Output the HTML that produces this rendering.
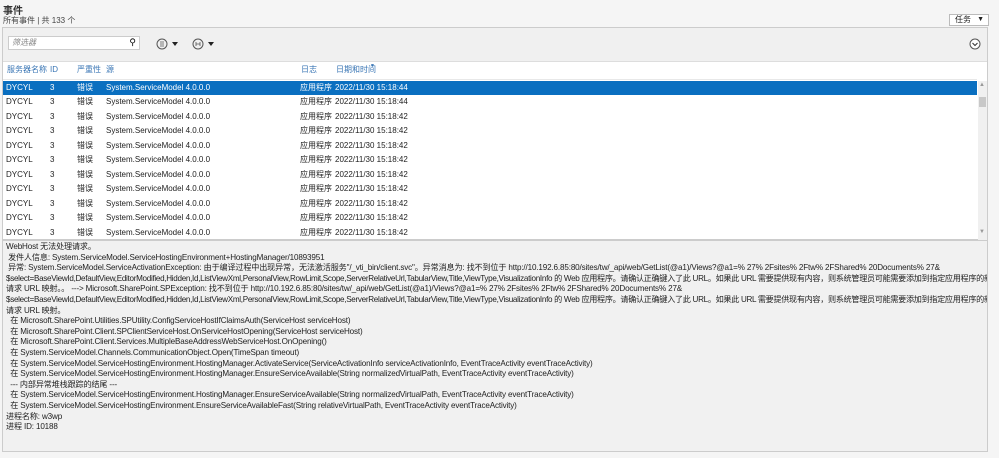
<!DOCTYPE html>
<html><head><meta charset="utf-8"><style>
*{margin:0;padding:0;box-sizing:border-box}
body{width:999px;height:458px;background:#f5f5f5;font-family:"Liberation Sans","Noto Sans CJK SC",sans-serif;position:relative;overflow:hidden;color:#222}
.a{position:absolute;white-space:nowrap}
.title{left:3px;top:2px;font-size:10px;font-weight:bold;color:#333}
.sub{left:3px;top:15px;font-size:8px;color:#444}
.task{left:949px;top:14px;width:40px;height:12px;border:1px solid #bbb;background:#fff;font-size:8px;padding-left:5px;line-height:10px}
.panel{left:2px;top:27px;width:986px;height:213px;border:1px solid #ccc;background:#fff}
.tb{left:3px;top:28px;width:984px;height:34px;background:#f0f0f0;border-bottom:1px solid #ddd}
.filter{left:8px;top:36px;width:132px;height:14px;background:#fff;border:1px solid #ccc;font-size:8px;font-style:italic;color:#888;padding-left:3px;line-height:12px}
.hdr{top:64px;height:16px;font-size:8px;color:#3a76b5;line-height:12px}
.row{left:3px;width:974px;height:14.5px;font-size:8px;line-height:14.5px}
.sel{background:#0a6fc0;color:#fff}
.c{position:absolute}
.sb{left:978px;top:81px;width:9px;height:159px;background:#f0f0f0}
.det{left:2px;top:240px;width:986px;height:212px;background:#f1f1f1;border:1px solid #ccc;font-size:8.1px;line-height:10.6px;padding:1px 0 0 3px;letter-spacing:-0.15px;color:#222;overflow:hidden}
.det div{white-space:nowrap}
.t{letter-spacing:-0.3px}
</style></head><body>
<div class="a title">事件</div>
<div class="a sub">所有事件 | 共 133 个</div>
<div class="a task">任务<span style="position:absolute;right:4px;top:0;font-size:7px">▼</span></div>
<div class="a panel"></div>
<div class="a tb"></div>
<div class="a filter">筛选器<span style="position:absolute;right:3px;top:-1px;font-style:normal;color:#000;font-size:9px">⚲</span></div>
<svg class="a" style="left:155px;top:37px" width="60" height="14"><circle cx="7" cy="7" r="5" fill="none" stroke="#555"/><path d="M5 5h4M5 7h4M5 9h4" stroke="#555" stroke-width="0.8"/><path d="M17 5h6l-3 4z" fill="#222"/><circle cx="43" cy="7" r="5" fill="none" stroke="#555"/><path d="M41 5v4M45 5v4M41 7h4" stroke="#555" stroke-width="0.8"/><path d="M53 5h6l-3 4z" fill="#222"/></svg>
<svg class="a" style="left:969px;top:38px" width="12" height="12"><circle cx="6" cy="6" r="5" fill="#fff" stroke="#555"/><path d="M3.5 5l2.5 2.5 2.5-2.5" fill="none" stroke="#333"/></svg>
<div class="a hdr" style="left:7px">服务器名称</div>
<div class="a hdr" style="left:50px">ID</div>
<div class="a hdr" style="left:77px">严重性</div>
<div class="a hdr" style="left:106px">源</div>
<div class="a hdr" style="left:301px">日志</div>
<div class="a hdr" style="left:336px">日期和时间</div>
<div class="a" style="left:370px;top:63px;font-size:5px;color:#3a76b5">▼</div>
<div class="a" style="left:3px;top:79px;width:974px;height:1px;background:#e8e8e8"></div>
<div class="a row sel" style="top:80.5px"><span class="c" style="left:3px">DYCYL</span><span class="c" style="left:47px">3</span><span class="c" style="left:74px">错误</span><span class="c" style="left:103px">System.ServiceModel 4.0.0.0</span><span class="c" style="left:297px">应用程序</span><span class="c" style="left:332px">2022/11/30 15:18:44</span></div>
<div class="a row" style="top:95px"><span class="c" style="left:3px">DYCYL</span><span class="c" style="left:47px">3</span><span class="c" style="left:74px">错误</span><span class="c" style="left:103px">System.ServiceModel 4.0.0.0</span><span class="c" style="left:297px">应用程序</span><span class="c" style="left:332px">2022/11/30 15:18:44</span></div>
<div class="a row" style="top:109.5px"><span class="c" style="left:3px">DYCYL</span><span class="c" style="left:47px">3</span><span class="c" style="left:74px">错误</span><span class="c" style="left:103px">System.ServiceModel 4.0.0.0</span><span class="c" style="left:297px">应用程序</span><span class="c" style="left:332px">2022/11/30 15:18:42</span></div>
<div class="a row" style="top:124px"><span class="c" style="left:3px">DYCYL</span><span class="c" style="left:47px">3</span><span class="c" style="left:74px">错误</span><span class="c" style="left:103px">System.ServiceModel 4.0.0.0</span><span class="c" style="left:297px">应用程序</span><span class="c" style="left:332px">2022/11/30 15:18:42</span></div>
<div class="a row" style="top:138.5px"><span class="c" style="left:3px">DYCYL</span><span class="c" style="left:47px">3</span><span class="c" style="left:74px">错误</span><span class="c" style="left:103px">System.ServiceModel 4.0.0.0</span><span class="c" style="left:297px">应用程序</span><span class="c" style="left:332px">2022/11/30 15:18:42</span></div>
<div class="a row" style="top:153px"><span class="c" style="left:3px">DYCYL</span><span class="c" style="left:47px">3</span><span class="c" style="left:74px">错误</span><span class="c" style="left:103px">System.ServiceModel 4.0.0.0</span><span class="c" style="left:297px">应用程序</span><span class="c" style="left:332px">2022/11/30 15:18:42</span></div>
<div class="a row" style="top:167.5px"><span class="c" style="left:3px">DYCYL</span><span class="c" style="left:47px">3</span><span class="c" style="left:74px">错误</span><span class="c" style="left:103px">System.ServiceModel 4.0.0.0</span><span class="c" style="left:297px">应用程序</span><span class="c" style="left:332px">2022/11/30 15:18:42</span></div>
<div class="a row" style="top:182px"><span class="c" style="left:3px">DYCYL</span><span class="c" style="left:47px">3</span><span class="c" style="left:74px">错误</span><span class="c" style="left:103px">System.ServiceModel 4.0.0.0</span><span class="c" style="left:297px">应用程序</span><span class="c" style="left:332px">2022/11/30 15:18:42</span></div>
<div class="a row" style="top:196.5px"><span class="c" style="left:3px">DYCYL</span><span class="c" style="left:47px">3</span><span class="c" style="left:74px">错误</span><span class="c" style="left:103px">System.ServiceModel 4.0.0.0</span><span class="c" style="left:297px">应用程序</span><span class="c" style="left:332px">2022/11/30 15:18:42</span></div>
<div class="a row" style="top:211px"><span class="c" style="left:3px">DYCYL</span><span class="c" style="left:47px">3</span><span class="c" style="left:74px">错误</span><span class="c" style="left:103px">System.ServiceModel 4.0.0.0</span><span class="c" style="left:297px">应用程序</span><span class="c" style="left:332px">2022/11/30 15:18:42</span></div>
<div class="a row" style="top:225.5px"><span class="c" style="left:3px">DYCYL</span><span class="c" style="left:47px">3</span><span class="c" style="left:74px">错误</span><span class="c" style="left:103px">System.ServiceModel 4.0.0.0</span><span class="c" style="left:297px">应用程序</span><span class="c" style="left:332px">2022/11/30 15:18:42</span></div>
<div class="a sb"></div>
<div class="a" style="left:979px;top:82px;font-size:6px;color:#999">▲</div>
<div class="a" style="left:979px;top:97px;width:7px;height:10px;background:#c8c8c8"></div>
<div class="a" style="left:979px;top:229px;font-size:6px;color:#999">▼</div>
<div class="a det">
<div>WebHost 无法处理请求。</div>
<div>&nbsp;发件人信息: System.ServiceModel.ServiceHostingEnvironment+HostingManager/10893951</div>
<div>&nbsp;异常: System.ServiceModel.ServiceActivationException: 由于编译过程中出现异常，无法激活服务"/_vti_bin/client.svc"。异常消息为: 找不到位于 http://10.192.6.85:80/sites/tw/_api/web/GetList(@a1)/Views?@a1=% 27% 2Fsites% 2Ftw% 2FShared% 20Documents% 27&amp;</div>
<div class="t">$select=BaseViewId,DefaultView,EditorModified,Hidden,Id,ListViewXml,PersonalView,RowLimit,Scope,ServerRelativeUrl,TabularView,Title,ViewType,VisualizationInfo 的 Web 应用程序。请确认正确键入了此 URL。如果此 URL 需要提供现有内容，则系统管理员可能需要添加到指定应用程序的新</div>
<div>请求 URL 映射。。 ---&gt; Microsoft.SharePoint.SPException: 找不到位于 http://10.192.6.85:80/sites/tw/_api/web/GetList(@a1)/Views?@a1=% 27% 2Fsites% 2Ftw% 2FShared% 20Documents% 27&amp;</div>
<div class="t">$select=BaseViewId,DefaultView,EditorModified,Hidden,Id,ListViewXml,PersonalView,RowLimit,Scope,ServerRelativeUrl,TabularView,Title,ViewType,VisualizationInfo 的 Web 应用程序。请确认正确键入了此 URL。如果此 URL 需要提供现有内容，则系统管理员可能需要添加到指定应用程序的新</div>
<div>请求 URL 映射。</div>
<div>&nbsp;&nbsp;在 Microsoft.SharePoint.Utilities.SPUtility.ConfigServiceHostIfClaimsAuth(ServiceHost serviceHost)</div>
<div>&nbsp;&nbsp;在 Microsoft.SharePoint.Client.SPClientServiceHost.OnServiceHostOpening(ServiceHost serviceHost)</div>
<div>&nbsp;&nbsp;在 Microsoft.SharePoint.Client.Services.MultipleBaseAddressWebServiceHost.OnOpening()</div>
<div>&nbsp;&nbsp;在 System.ServiceModel.Channels.CommunicationObject.Open(TimeSpan timeout)</div>
<div>&nbsp;&nbsp;在 System.ServiceModel.ServiceHostingEnvironment.HostingManager.ActivateService(ServiceActivationInfo serviceActivationInfo, EventTraceActivity eventTraceActivity)</div>
<div>&nbsp;&nbsp;在 System.ServiceModel.ServiceHostingEnvironment.HostingManager.EnsureServiceAvailable(String normalizedVirtualPath, EventTraceActivity eventTraceActivity)</div>
<div>&nbsp;&nbsp;--- 内部异常堆栈跟踪的结尾 ---</div>
<div>&nbsp;&nbsp;在 System.ServiceModel.ServiceHostingEnvironment.HostingManager.EnsureServiceAvailable(String normalizedVirtualPath, EventTraceActivity eventTraceActivity)</div>
<div>&nbsp;&nbsp;在 System.ServiceModel.ServiceHostingEnvironment.EnsureServiceAvailableFast(String relativeVirtualPath, EventTraceActivity eventTraceActivity)</div>
<div>进程名称: w3wp</div>
<div>进程 ID: 10188</div>
</div>
</body></html>
